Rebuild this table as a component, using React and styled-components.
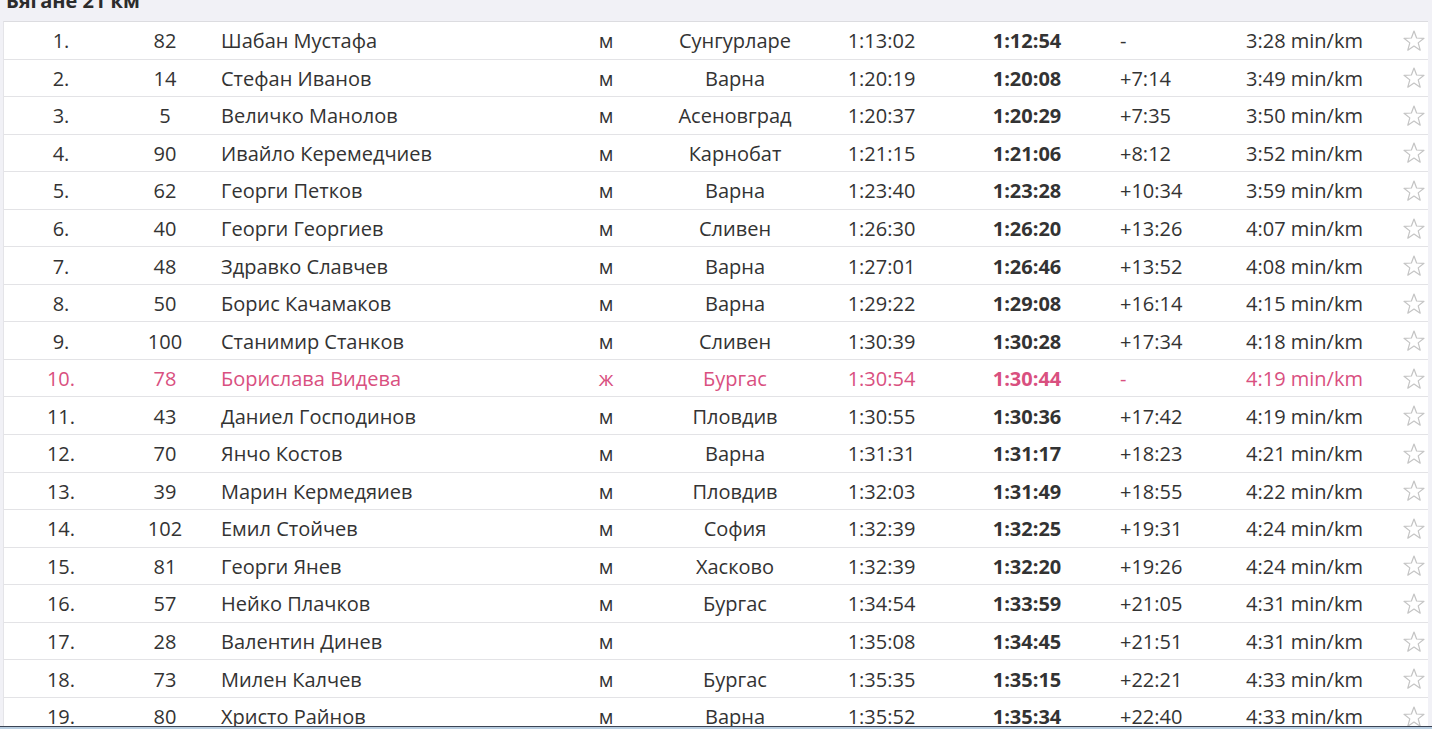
import React from 'react';
import styled, { createGlobalStyle } from 'styled-components';

const rows = [
    ['1.', '82', 'Шабан Мустафа', 'м', 'Сунгурларе', '1:13:02', '1:12:54', '-', '3:28 min/km'],
    ['2.', '14', 'Стефан Иванов', 'м', 'Варна', '1:20:19', '1:20:08', '+7:14', '3:49 min/km'],
    ['3.', '5', 'Величко Манолов', 'м', 'Асеновград', '1:20:37', '1:20:29', '+7:35', '3:50 min/km'],
    ['4.', '90', 'Ивайло Керемедчиев', 'м', 'Карнобат', '1:21:15', '1:21:06', '+8:12', '3:52 min/km'],
    ['5.', '62', 'Георги Петков', 'м', 'Варна', '1:23:40', '1:23:28', '+10:34', '3:59 min/km'],
    ['6.', '40', 'Георги Георгиев', 'м', 'Сливен', '1:26:30', '1:26:20', '+13:26', '4:07 min/km'],
    ['7.', '48', 'Здравко Славчев', 'м', 'Варна', '1:27:01', '1:26:46', '+13:52', '4:08 min/km'],
    ['8.', '50', 'Борис Качамаков', 'м', 'Варна', '1:29:22', '1:29:08', '+16:14', '4:15 min/km'],
    ['9.', '100', 'Станимир Станков', 'м', 'Сливен', '1:30:39', '1:30:28', '+17:34', '4:18 min/km'],
    ['10.', '78', 'Борислава Видева', 'ж', 'Бургас', '1:30:54', '1:30:44', '-', '4:19 min/km'],
    ['11.', '43', 'Даниел Господинов', 'м', 'Пловдив', '1:30:55', '1:30:36', '+17:42', '4:19 min/km'],
    ['12.', '70', 'Янчо Костов', 'м', 'Варна', '1:31:31', '1:31:17', '+18:23', '4:21 min/km'],
    ['13.', '39', 'Марин Кермедяиев', 'м', 'Пловдив', '1:32:03', '1:31:49', '+18:55', '4:22 min/km'],
    ['14.', '102', 'Емил Стойчев', 'м', 'София', '1:32:39', '1:32:25', '+19:31', '4:24 min/km'],
    ['15.', '81', 'Георги Янев', 'м', 'Хасково', '1:32:39', '1:32:20', '+19:26', '4:24 min/km'],
    ['16.', '57', 'Нейко Плачков', 'м', 'Бургас', '1:34:54', '1:33:59', '+21:05', '4:31 min/km'],
    ['17.', '28', 'Валентин Динев', 'м', '', '1:35:08', '1:34:45', '+21:51', '4:31 min/km'],
    ['18.', '73', 'Милен Калчев', 'м', 'Бургас', '1:35:35', '1:35:15', '+22:21', '4:33 min/km'],
    ['19.', '80', 'Христо Райнов', 'м', 'Варна', '1:35:52', '1:35:34', '+22:40', '4:33 min/km'],
];

const Star = () => (
    <svg width="24" height="24" viewBox="0 0 24 24">
        <polygon
            points="12,2 14.6,9 22,9.3 16.2,13.9 18.2,21.2 12,17 5.8,21.2 7.8,13.9 2,9.3 9.4,9"
            fill="none"
            stroke="#c4c4c4"
            strokeWidth="1.2"
            strokeLinejoin="round"
        />
    </svg>
);

const App = () => {
    return (
        <>
            <GlobalStyle />
            <Page>
                <Heading>Бягане 21 км</Heading>
                <Results>
                    {rows.map((r) => (
                        <Row key={r[0]} $female={r[3] === 'ж'}>
                            <Cell $align="center">{r[0]}</Cell>
                            <Cell $align="center">{r[1]}</Cell>
                            <Cell $pad="9px">{r[2]}</Cell>
                            <Cell $align="center">{r[3]}</Cell>
                            <Cell $align="center">{r[4]}</Cell>
                            <Cell $align="center">{r[5]}</Cell>
                            <Cell $align="center" $bold>{r[6]}</Cell>
                            <Cell $pad="16px">{r[7]}</Cell>
                            <Cell $pad="16px">{r[8]}</Cell>
                            <Cell $align="center"><Star /></Cell>
                        </Row>
                    ))}
                </Results>
            </Page>
            <Taskbar />
        </>
    );
};

export default App;

const GlobalStyle = createGlobalStyle`
    html, body {
        margin: 0;
        height: 729px;
        overflow: hidden;
        background: #f1f1f6;
    }
    body {
        font-family: "Open Sans", "Liberation Sans", sans-serif;
        color: #333;
    }
`

const Page = styled.div`
    padding: 0 4px 0 3px;
`

const Heading = styled.h2`
    margin: -12px 0 0;
    padding: 0 0 0 3px;
    height: 33px;
    box-sizing: border-box;
    font-size: 20px;
    line-height: 26px;
    font-weight: 700;
    color: #2c2c2c;
`

const Results = styled.div`
    width: 1425px;
    background: #fff;
    border-top: 1px solid #dcdce0;
    border-left: 1px solid #e4e4e8;
    box-sizing: border-box;
`

const Row = styled.div`
    display: grid;
    grid-template-columns: 114px 94px 343px 102px 156px 137px 154px 126px 170px 28px;
    height: 37.55px;
    align-items: center;
    border-bottom: 1px solid #e3e3e6;
    box-sizing: border-box;
    font-size: 20px;
    padding-top: 1px;
    color: ${(p) => (p.$female ? '#d9507f' : '#333')};
`

const Cell = styled.div`
    text-align: ${(p) => p.$align || 'left'};
    padding-left: ${(p) => p.$pad || '0'};
    font-weight: ${(p) => (p.$bold ? 700 : 400)};
    white-space: nowrap;
    overflow: hidden;

    > svg {
        display: block;
        margin: 0 auto;
    }
`

const Taskbar = styled.div`
    position: fixed;
    left: 0;
    right: 0;
    bottom: 0;
    height: 2px;
    border-top: 1px solid #3b4454;
    background: #b8cde0;
`
